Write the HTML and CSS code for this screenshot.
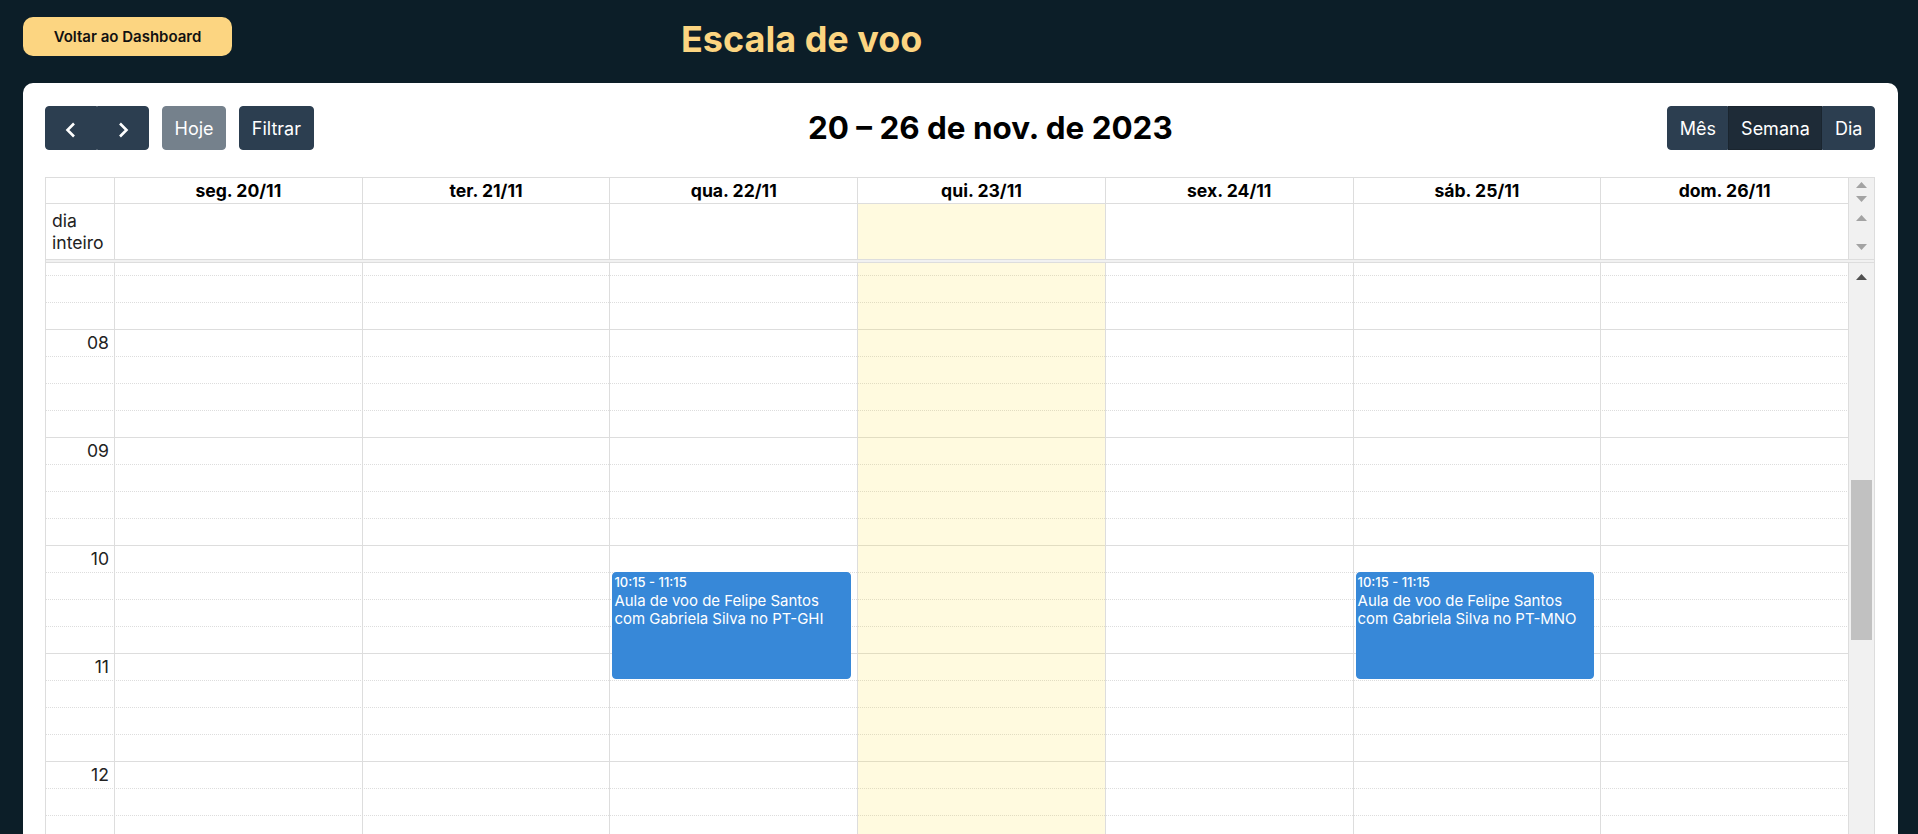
FILE: index.html
```html
<!DOCTYPE html>
<html lang="pt-BR">
<head>
<meta charset="utf-8">
<title>Escala de voo</title>
<link rel="stylesheet" href="styles.css">
</head>
<body>
<header class="topbar">
  <button class="back-btn">Voltar ao Dashboard</button>
  <h1 class="page-title">Escala de voo</h1>
</header>
<main class="card">
  <div class="toolbar">
    <div class="chunk">
      <div class="btn-group">
        <button class="btn btn-icon" aria-label="Anterior"><svg width="26" height="26" viewBox="0 0 26 26"><polyline points="16,6.5 9.5,13 16,19.5" fill="none" stroke="#fff" stroke-width="2.6"/></svg></button>
        <button class="btn btn-icon" aria-label="Próximo"><svg width="26" height="26" viewBox="0 0 26 26"><polyline points="10,6.5 16.5,13 10,19.5" fill="none" stroke="#fff" stroke-width="2.6"/></svg></button>
      </div>
      <button class="btn btn-disabled">Hoje</button>
      <button class="btn">Filtrar</button>
    </div>
    <h2 class="range-title">20 – 26 de nov. de 2023</h2>
    <div class="chunk">
      <div class="btn-group">
        <button class="btn">Mês</button>
        <button class="btn btn-active">Semana</button>
        <button class="btn">Dia</button>
      </div>
    </div>
  </div>

  <div class="cal">
    <div class="cal-head">
      <div class="cell axis"></div>
      <div class="cell day-head">seg. 20/11</div>
      <div class="cell day-head">ter. 21/11</div>
      <div class="cell day-head">qua. 22/11</div>
      <div class="cell day-head">qui. 23/11</div>
      <div class="cell day-head">sex. 24/11</div>
      <div class="cell day-head">sáb. 25/11</div>
      <div class="cell day-head">dom. 26/11</div>
      <div class="gutter gutter-head">
        <svg class="arrow" width="11" height="6" viewBox="0 0 11 6"><path d="M0 6 5.5 0 11 6Z"/></svg>
        <svg class="arrow arrow-gap-s" width="11" height="6" viewBox="0 0 11 6"><path d="M0 0 5.5 6 11 0Z"/></svg>
      </div>
    </div>
    <div class="cal-allday">
      <div class="cell axis allday-label">dia inteiro</div>
      <div class="cell"></div>
      <div class="cell"></div>
      <div class="cell"></div>
      <div class="cell today"></div>
      <div class="cell"></div>
      <div class="cell"></div>
      <div class="cell"></div>
      <div class="gutter gutter-allday">
        <svg class="arrow" width="11" height="6" viewBox="0 0 11 6"><path d="M0 6 5.5 0 11 6Z"/></svg>
        <svg class="arrow arrow-gap-l" width="11" height="6" viewBox="0 0 11 6"><path d="M0 0 5.5 6 11 0Z"/></svg>
      </div>
    </div>
    <div class="divider"></div>
    <div class="cal-body">
      <div class="timegrid">
        <div class="slots">
          <div class="slot-partial"></div>
          <div class="slot"></div>
          <div class="slot"></div>
          <div class="slot major"><span class="slot-label">08</span></div>
          <div class="slot"></div>
          <div class="slot"></div>
          <div class="slot"></div>
          <div class="slot major"><span class="slot-label">09</span></div>
          <div class="slot"></div>
          <div class="slot"></div>
          <div class="slot"></div>
          <div class="slot major"><span class="slot-label">10</span></div>
          <div class="slot"></div>
          <div class="slot"></div>
          <div class="slot"></div>
          <div class="slot major"><span class="slot-label">11</span></div>
          <div class="slot"></div>
          <div class="slot"></div>
          <div class="slot"></div>
          <div class="slot major"><span class="slot-label">12</span></div>
          <div class="slot"></div>
          <div class="slot"></div>
          <div class="slot"></div>
        </div>
        <div class="cols">
          <div class="col"></div>
          <div class="col"></div>
          <div class="col"></div>
          <div class="col">
            <div class="event" style="top:309px;height:107px">
              <div class="event-time">10:15 - 11:15</div>
              <div class="event-title">Aula de voo de Felipe Santos com Gabriela Silva no PT-GHI</div>
            </div>
          </div>
          <div class="col today"></div>
          <div class="col"></div>
          <div class="col">
            <div class="event" style="top:309px;height:107px">
              <div class="event-time">10:15 - 11:15</div>
              <div class="event-title">Aula de voo de Felipe Santos com Gabriela Silva no PT-MNO</div>
            </div>
          </div>
          <div class="col"></div>
        </div>
      </div>
      <div class="vscroll">
        <svg class="arrow arrow-dark" width="11" height="6" viewBox="0 0 11 6"><path d="M0 6 5.5 0 11 6Z"/></svg>
        <div class="thumb"></div>
      </div>
    </div>
  </div>
</main>
</body>
</html>
```

FILE: styles.css
```css
* { box-sizing: border-box; }

html, body {
  margin: 0;
  height: 834px;
  overflow: hidden;
}

body {
  background: #0c1e28;
  font-family: Inter, "Noto Sans", sans-serif;
  color: #222;
}

/* Top bar */
.topbar {
  display: flex;
  align-items: flex-start;
  height: 83px;
  padding: 17px 0 0 23px;
}

.back-btn {
  width: 209px;
  height: 39px;
  border: 0;
  border-radius: 10px;
  background: #fcd581;
  color: #111;
  font: 600 15px/1 Inter, sans-serif;
  cursor: pointer;
}

.page-title {
  margin: 0 0 0 449px;
  font: 700 36px/44px Inter, sans-serif;
  color: #fcd581;
}

/* Card */
.card {
  margin: 0 20px 0 23px;
  background: #fff;
  border-radius: 10px;
  padding: 23px 23px 0 22px;
  font-size: 17.6px;
}

.toolbar {
  display: flex;
  justify-content: space-between;
  align-items: center;
  height: 44px;
  margin-bottom: 27px;
}

.chunk {
  display: flex;
  align-items: center;
  gap: 13px;
}

.btn {
  height: 44px;
  padding: 0 11.6px;
  border: 1px solid #2c3e50;
  background: #2c3e50;
  color: #fff;
  font: 400 18px/1.5 Inter, sans-serif;
  border-radius: 4px;
  display: inline-flex;
  align-items: center;
  justify-content: center;
}

.btn-group { display: flex; }
.btn-group .btn { border-radius: 0; }
.btn-group .btn:first-child { border-radius: 4px 0 0 4px; }
.btn-group .btn:last-child { border-radius: 0 4px 4px 0; }

.btn-disabled { opacity: .65; }
.btn-active { background: #1e2b37; border-color: #1a252f; }

.btn-icon { width: 52px; padding: 0; }
.btn-icon svg { display: block; margin-top: 3px; }

.range-title {
  margin: 0;
  font: 700 31.4px/1.21 Inter, sans-serif;
  color: #000;
}

/* Calendar */
.cal {
  border: 1px solid #ddd;
  border-bottom: 0;
}

.cal-head,
.cal-allday {
  display: grid;
  grid-template-columns: 69px repeat(7, 1fr) 25px;
}

.cell { border-right: 1px solid #ddd; }

.cal-head .cell {
  height: 26px;
  border-bottom: 1px solid #ddd;
}

.day-head {
  font-weight: 700;
  text-align: center;
  padding: 2px 4px;
  line-height: 21px;
  color: #000;
}

.cal-allday .cell {
  height: 56px;
  border-bottom: 1px solid #ddd;
}

.allday-label {
  display: flex;
  align-items: center;
  padding-left: 6px;
  line-height: 21.3px;
  color: #222;
}

.today { background: rgba(255, 220, 40, .15); }

.gutter {
  background: #f1f1f1;
  display: flex;
  flex-direction: column;
  align-items: center;
}

.gutter-head { padding-top: 4px; }
.gutter-allday { padding-top: 11px; border-bottom: 1px solid #ddd; }

.arrow { display: block; fill: #a3a3a3; }
.arrow-gap-s { margin-top: 8px; }
.arrow-gap-l { margin-top: 23px; }
.arrow-dark { fill: #505050; }

.divider {
  height: 3px;
  background: #f1f1f1;
  border-bottom: 1px solid #ddd;
}

.cal-body {
  display: flex;
  height: 600px;
  overflow: hidden;
}

.timegrid {
  flex: 1;
  position: relative;
}

.slot-partial { height: 12px; }

.slot {
  height: 27px;
  border-top: 1px dotted #ddd;
  display: flex;
  align-items: center;
}

.slot.major { border-top-style: solid; }

.slot-label {
  width: 68px;
  text-align: right;
  padding-right: 5px;
  line-height: 1.21;
  color: #222;
}

.cols {
  position: absolute;
  inset: 0;
  display: grid;
  grid-template-columns: 69px repeat(7, 1fr);
}

.col {
  position: relative;
  border-right: 1px solid #ddd;
}

.col.today { background: rgba(255, 220, 40, .15); }

.event {
  position: absolute;
  left: 2px;
  right: 2.5%;
  background: #3788d8;
  border: 1px solid #3788d8;
  border-radius: 4px;
  color: #fff;
  padding: 1px 1px 0;
  font-size: 14.96px;
  line-height: 18.2px;
  overflow: hidden;
}

.event-time {
  font-size: 13px;
  font-weight: 500;
  line-height: 16px;
  margin-bottom: 2px;
  white-space: nowrap;
}

.vscroll {
  width: 25px;
  background: #f1f1f1;
  display: flex;
  flex-direction: column;
  align-items: center;
  padding-top: 11px;
}

.thumb {
  margin-top: 200px;
  width: 21px;
  height: 160px;
  background: #c1c1c1;
}
```
